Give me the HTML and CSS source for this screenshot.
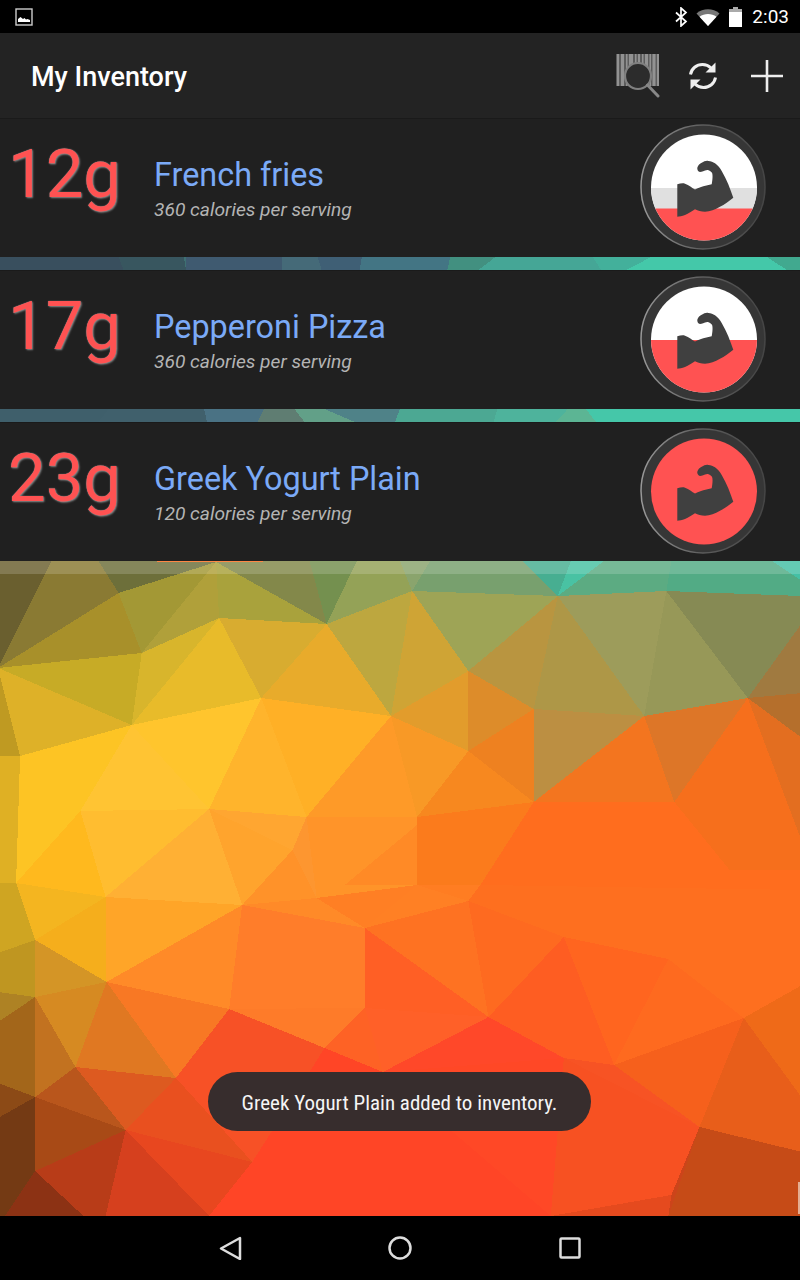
FILE: index.html
```html
<!DOCTYPE html>
<html lang="en">
<head>
  <meta charset="UTF-8">
  <meta name="viewport" content="width=device-width, initial-scale=1.0">
  <title>My Inventory</title>
  <link rel="stylesheet" href="styles.css">
</head>
<body>
  <div class="screen">
    <!-- Wallpaper, sits behind the whole list -->
    <svg class="wallpaper" viewBox="0 0 800 1216" width="800" height="1216">
      <defs>
        <linearGradient id="band" x1="0" x2="1" y1="0" y2="0">
          <stop offset="0" stop-color="#3b5260"/>
          <stop offset="0.6" stop-color="#44a090"/>
          <stop offset="0.8" stop-color="#45c7a9"/>
        </linearGradient>
      </defs>
      <rect y="0" width="800" height="561" fill="url(#band)"/>
      <rect y="561" width="800" height="655" fill="#fe6f1f"/>

      <!-- strip between row 1 and row 2 -->
      <polygon points="0,257 120,257 125,270 0,270" fill="#394f5e"/>
      <polygon points="120,257 185,257 187,270 125,270" fill="#38565f"/>
      <polygon points="187,257 283,257 283,270 187,270" fill="#3f5a70"/>
      <polygon points="283,257 318,257 322,270 283,270" fill="#456a78"/>
      <polygon points="318,257 362,257 360,270 322,270" fill="#3f5f75"/>
      <polygon points="362,257 450,257 447,270 360,270" fill="#437584"/>
      <polygon points="450,257 495,257 478,270 447,270" fill="#429080"/>
      <polygon points="495,257 592,257 600,270 478,270" fill="#45a696"/>
      <polygon points="592,257 650,257 625,270 600,270" fill="#43b09b"/>
      <polygon points="650,257 765,257 785,270 625,270" fill="#44c8a9"/>
      <polygon points="765,257 800,257 800,270 785,270" fill="#41a98f"/>

      <!-- strip between row 2 and row 3 -->
      <polygon points="0,409 110,409 100,422 0,422" fill="#3f5f6b"/>
      <polygon points="110,409 205,409 208,422 100,422" fill="#40606c"/>
      <polygon points="205,409 265,409 258,422 208,422" fill="#4a7284"/>
      <polygon points="265,409 295,409 305,422 258,422" fill="#5f7d72"/>
      <polygon points="295,409 325,409 355,422 305,422" fill="#62a088"/>
      <polygon points="325,409 400,409 395,422 355,422" fill="#4f8288"/>
      <polygon points="400,409 497,409 493,422 395,422" fill="#4ca893"/>
      <polygon points="497,409 567,409 555,422 493,422" fill="#4eb39c"/>
      <polygon points="567,409 585,409 595,422 555,422" fill="#5cb594"/>
      <polygon points="585,409 800,409 800,422 595,422" fill="#45c7a9"/>

      <!-- top of the open area -->
      <polygon points="0,561 53,561 0,668" fill="#6a5f2f"/>
      <polygon points="53,561 100,561 120,593 0,668" fill="#8a7a33"/>
      <polygon points="100,561 217,562 120,593" fill="#6d6f3a"/>
      <polygon points="120,593 217,562 143,653" fill="#a39835"/>
      <polygon points="217,562 220,618 143,653" fill="#b0a03a"/>
      <polygon points="0,668 120,593 143,653" fill="#a8902a"/>
      <polygon points="217,562 327,624 220,618" fill="#a9a23c"/>
      <polygon points="217,562 310,561 327,624" fill="#83884a"/>
      <polygon points="310,561 357,561 327,624" fill="#74904f"/>
      <polygon points="357,561 400,561 412,591 327,624" fill="#94a257"/>
      <polygon points="400,561 430,561 412,591" fill="#8aa46d"/>
      <polygon points="430,561 522,561 557,596 412,591" fill="#78a06e"/>
      <polygon points="522,561 570,561 557,596" fill="#47ae91"/>
      <polygon points="570,561 603,561 557,596" fill="#49c2a3"/>
      <polygon points="603,561 670,561 665,591 557,596" fill="#5cab82"/>
      <polygon points="670,561 770,561 800,581 800,596 665,591" fill="#52ab85"/>
      <polygon points="770,561 800,561 800,581" fill="#45c0a5"/>

      <polygon points="327,624 412,591 391,716" fill="#bda73f"/>
      <polygon points="412,591 468,671 391,716" fill="#cfa435"/>
      <polygon points="412,591 557,596 468,671" fill="#9ea456"/>
      <polygon points="557,596 533,709 468,671" fill="#b99540"/>
      <polygon points="557,596 643,716 533,709" fill="#ae9747"/>
      <polygon points="557,596 665,591 643,716" fill="#9d9c5b"/>
      <polygon points="665,591 746,698 643,716" fill="#979858"/>
      <polygon points="665,591 800,596 800,623 746,698" fill="#868a54"/>
      <polygon points="800,623 800,693 746,698" fill="#a07a40"/>
      <polygon points="746,698 800,693 800,738" fill="#b56f2c"/>
      <polygon points="746,698 800,738 800,842" fill="#e36e20"/>
      <polygon points="746,698 800,842 800,870 728,870 673,802" fill="#f66f1c"/>
      <polygon points="643,716 746,698 673,802" fill="#dd7628"/>
      <polygon points="643,716 673,802 533,802" fill="#f3751f"/>
      <polygon points="533,709 643,716 533,802" fill="#bc8f42"/>
      <polygon points="468,671 533,709 468,751" fill="#dd8c2a"/>
      <polygon points="468,751 533,709 533,802" fill="#ee8120"/>
      <polygon points="391,716 468,671 468,751" fill="#e29c2c"/>
      <polygon points="391,716 468,751 417,817" fill="#f89926"/>
      <polygon points="468,751 533,802 417,817" fill="#f7881f"/>
      <polygon points="417,817 533,802 480,885 417,885" fill="#fb7b1c"/>
      <polygon points="533,802 673,802 728,870 800,870 800,890 480,885" fill="#ff6d1e"/>

      <!-- yellow middle -->
      <polygon points="0,668 143,653 133,725" fill="#c7ab26"/>
      <polygon points="143,653 220,618 133,725" fill="#d8b52c"/>
      <polygon points="220,618 262,698 133,725" fill="#e8bb2a"/>
      <polygon points="220,618 327,624 262,698" fill="#d8ac30"/>
      <polygon points="327,624 391,716 262,698" fill="#e8ab2b"/>
      <polygon points="0,668 133,725 22,756" fill="#deb128"/>
      <polygon points="0,668 22,756 0,756" fill="#bf9a22"/>
      <polygon points="0,756 22,756 18,883 0,883" fill="#dfb024"/>
      <polygon points="22,756 133,725 82,811" fill="#fdc424"/>
      <polygon points="22,756 82,811 18,883" fill="#fdc424"/>
      <polygon points="133,725 262,698 210,809" fill="#ffc52d"/>
      <polygon points="133,725 210,809 82,811" fill="#ffc433"/>
      <polygon points="262,698 307,817 210,809" fill="#ffb42c"/>
      <polygon points="262,698 391,716 307,817" fill="#ffb026"/>
      <polygon points="391,716 417,817 307,817" fill="#fe9a28"/>
      <polygon points="307,817 417,817 417,885 317,898" fill="#ff9429"/>
      <polygon points="345,885 417,825 417,885" fill="#ff8a26"/>
      <polygon points="417,885 480,885 468,901" fill="#ff7d22"/>
      <polygon points="210,809 307,817 293,850" fill="#ffa631"/>
      <polygon points="210,809 293,850 243,905" fill="#ffa42d"/>
      <polygon points="293,850 307,817 317,898" fill="#fd9630"/>
      <polygon points="293,850 317,898 243,905" fill="#ff9229"/>
      <polygon points="82,811 210,809 107,897" fill="#ffbd30"/>
      <polygon points="210,809 243,905 107,897" fill="#ffb034"/>
      <polygon points="82,811 107,897 18,883" fill="#ffb91e"/>

      <!-- lower left, getting darker -->
      <polygon points="18,883 107,897 37,940" fill="#f4b520"/>
      <polygon points="107,897 108,982 37,940" fill="#f5ae1c"/>
      <polygon points="107,897 243,905 108,982" fill="#ffa528"/>
      <polygon points="243,905 230,1009 108,982" fill="#ff8a28"/>
      <polygon points="243,905 317,898 365,928" fill="#ff8a28"/>
      <polygon points="243,905 365,928 365,1008 230,1009" fill="#ff7d2a"/>
      <polygon points="317,898 417,885 365,928" fill="#ff7f24"/>
      <polygon points="0,883 18,883 37,940 0,953" fill="#cfa522"/>
      <polygon points="0,953 37,940 37,997 0,992" fill="#bf9621"/>
      <polygon points="37,940 108,982 37,997" fill="#d49526"/>
      <polygon points="0,992 37,997 0,1022" fill="#ae8224"/>
      <polygon points="0,1022 37,997 37,1097 0,1083" fill="#a3661a"/>
      <polygon points="37,997 77,1067 37,1097" fill="#c27220"/>
      <polygon points="37,997 108,982 77,1067" fill="#d68a22"/>
      <polygon points="108,982 177,1078 77,1067" fill="#e07822"/>
      <polygon points="108,982 230,1009 177,1078" fill="#f87824"/>
      <polygon points="77,1067 177,1078 127,1130" fill="#dd5a20"/>
      <polygon points="77,1067 127,1130 37,1097" fill="#b9561c"/>
      <polygon points="37,1097 127,1130 37,1171" fill="#a84a16"/>
      <polygon points="0,1083 37,1097 0,1118" fill="#8c4a16"/>
      <polygon points="0,1118 37,1097 37,1171 7,1216 0,1216" fill="#743a14"/>
      <polygon points="37,1171 85,1216 7,1216" fill="#8c3214"/>
      <polygon points="37,1171 127,1130 107,1216 85,1216" fill="#b83c18"/>
      <polygon points="127,1130 210,1216 107,1216" fill="#d6401e"/>
      <polygon points="127,1130 253,1162 210,1216" fill="#e8471f"/>
      <polygon points="177,1078 253,1162 127,1130" fill="#e9501f"/>
      <polygon points="177,1078 230,1009 325,1048 253,1162" fill="#f75126"/>
      <polygon points="230,1009 365,1008 325,1048" fill="#fe7b29"/>
      <polygon points="365,1008 383,1072 325,1048" fill="#fe6225"/>
      <polygon points="325,1048 383,1072 550,1216 210,1216 253,1162" fill="#ff4526"/>

      <!-- lower right -->
      <polygon points="365,928 488,1017 365,1008" fill="#ff5f25"/>
      <polygon points="365,1008 488,1017 383,1072" fill="#ff6028"/>
      <polygon points="383,1072 488,1017 563,1058" fill="#ff4829"/>
      <polygon points="383,1072 563,1058 550,1216" fill="#ff4826"/>
      <polygon points="563,1058 613,1065 698,1127" fill="#f75324"/>
      <polygon points="563,1058 698,1127 670,1195 550,1216" fill="#f75122"/>
      <polygon points="670,1195 698,1127 667,1216" fill="#cc441a"/>
      <polygon points="550,1216 670,1195 667,1216" fill="#e54a1e"/>
      <polygon points="698,1127 800,1152 800,1216 667,1216" fill="#c64b17"/>
      <polygon points="742,1018 800,1098 800,1152 698,1127" fill="#e85e1a"/>
      <polygon points="742,1018 800,985 800,1098" fill="#ef6a18"/>
      <polygon points="613,1065 742,1018 698,1127" fill="#f6601c"/>
      <polygon points="667,959 742,1018 613,1065" fill="#fe6a1f"/>
      <polygon points="563,937 667,959 613,1065" fill="#ff651f"/>
      <polygon points="563,937 613,1065 563,1058 488,1017" fill="#fe5d22"/>
      <polygon points="468,901 563,937 488,1017" fill="#fe6a20"/>
      <polygon points="365,928 468,901 488,1017" fill="#fe7222"/>
      <polygon points="417,885 468,901 365,928" fill="#ff8024"/>
      <rect x="796" y="1182" width="4" height="32" fill="#f2d9c8" opacity="0.7"/>
    </svg>

    <!-- Status bar -->
    <div class="status-bar">
      <svg class="status-picture" viewBox="0 0 18 18" width="18" height="18">
        <rect x="1" y="1" width="16" height="16" fill="#000" stroke="#ccc" stroke-width="1.4"/>
        <path d="M3 14v-3l2.500-2 2.500 2 1.500-1 1.500 1.500 1.500-.5 2.500 1v2z" fill="#fff"/>
      </svg>
      <div class="status-right">
        <svg viewBox="0 0 14 20" width="14" height="20">
          <path d="M2 5.500l10 9-5 4.500v-18l5 4.500-10 9" fill="none" stroke="#fff" stroke-width="1.700"/>
        </svg>
        <svg class="status-wifi" viewBox="0 0 24 18" width="24" height="18">
          <path d="M0.500 5.500c6.500-5.600 16.500-5.600 23 0l-11.500 12.500z" fill="#777"/>
          <path d="M3.500 8.700c5-3.700 12-3.700 17 0l-8.500 9.300z" fill="#fff"/>
        </svg>
        <svg class="status-battery" viewBox="0 0 13 20" width="13" height="20">
          <path d="M4 0h5v2h4v18h-13v-18h4z" fill="#fff"/>
          <path d="M4 0h5v2h4v3h-13v-3h4z" fill="#aaa"/>
        </svg>
        <span class="status-time">2:03</span>
      </div>
    </div>

    <!-- Action bar -->
    <header class="action-bar">
      <h1 class="action-title">My Inventory</h1>
      <svg class="action-barcode" viewBox="0 0 44 44" width="44" height="44">
        <rect width="43" height="32" fill="#5c5c5c"/>
        <path d="M1 0h2v32h-2zM5 0h3v32h-3zM10 0h1.500v32h-1.500zM13 0h4v32h-4zM19 0h1.500v32h-1.500zM22 0h2v32h-2zM26 0h1.500v32h-1.500zM29 0h3v32h-3zM33.500 0h1.500v32h-1.500zM36.500 0h3v32h-3zM41 0h2v32h-2z" fill="#929292"/>
        <circle cx="22" cy="22" r="13" fill="#2c2c2c" stroke="#808080" stroke-width="2.200"/>
        <path d="M31.500 31l10.500 11" fill="none" stroke="#888" stroke-width="3" stroke-linecap="round"/>
      </svg>
      <svg class="action-refresh" viewBox="0 0 32 32" width="32" height="32">
        <path d="M3.500 14.500c1-6 6-10 12-10 3.500 0 6.500 1.500 8.500 3.500" fill="none" stroke="#eee" stroke-width="3"/>
        <path d="M28.500 17.500c-1 6-6 10-12 10-3.500 0-6.500-1.500-8.500-3.500" fill="none" stroke="#eee" stroke-width="3"/>
        <path d="M28.500 2.500v10h-10z" fill="#eee"/>
        <path d="M3.500 29.500v-10h10z" fill="#eee"/>
      </svg>
      <svg class="action-plus" viewBox="0 0 32 32" width="32" height="32">
        <path d="M16 0v32M0 16h32" fill="none" stroke="#eee" stroke-width="2.600"/>
      </svg>
    </header>

    <!-- Inventory list -->
    <main class="list">
      <article class="row">
        <div class="protein">12g</div>
        <div class="info">
          <div class="name">French fries</div>
          <div class="calories">360 calories per serving</div>
        </div>
        <svg class="gauge" viewBox="0 0 126 126" width="126" height="126">
          <defs>
            <linearGradient id="rim" x1="0" x2="1" y1="0" y2="0">
              <stop offset="0" stop-color="#999"/>
              <stop offset="0.5" stop-color="#5c5c5c"/>
              <stop offset="1" stop-color="#454545"/>
            </linearGradient>
          </defs>
          <circle cx="63" cy="63" r="62" fill="#363636" stroke="url(#rim)" stroke-width="1.500"/>
          <clipPath id="dial1"><circle cx="64" cy="63.500" r="53"/></clipPath>
          <g clip-path="url(#dial1)">
            <rect width="126" height="126" fill="#fff"/>
            <rect y="64" width="126" height="22" fill="#e0e0e0"/>
            <rect y="84.500" width="126" height="42" fill="#ff5252"/>
          </g>
          <path class="muscle" d="M37.300 60.300C40 59.500 43 59 45 59.700C49 61 52 64 55 65.500C58 64 60 63 63.300 62.200C66 61.500 69 61 71.700 60.300C72.500 56 73 51 72 48.700C70 46.500 68.500 45.800 67.300 46C64 46.500 62 48 60 48C58 47.500 57 45.500 57.300 43.700C58 41 60 39.500 61.700 38.700C64 37.500 66 36.500 68.300 37C71 37.200 73 38 75 39.300C78 41.500 80 44 81.700 47C84 51 86.500 56 88.300 60.300C90 65 92 70 93.300 73.700C89 77 84.500 80.500 80 82.700C75 85.500 70 87.500 65 87.700C61 87.700 58 86.500 55 85.300C52 87 48.500 89.500 45 91C42 92 39.500 92.500 37.300 92.700z"/>
        </svg>
      </article>
      <article class="row">
        <div class="protein">17g</div>
        <div class="info">
          <div class="name">Pepperoni Pizza</div>
          <div class="calories">360 calories per serving</div>
        </div>
        <svg class="gauge" viewBox="0 0 126 126" width="126" height="126">
          <circle cx="63" cy="63" r="62" fill="#363636" stroke="url(#rim)" stroke-width="1.500"/>
          <clipPath id="dial2"><circle cx="64" cy="63.500" r="53"/></clipPath>
          <g clip-path="url(#dial2)">
            <rect width="126" height="126" fill="#fff"/>
            <rect y="64" width="126" height="62" fill="#ff5252"/>
          </g>
          <path class="muscle" d="M37.300 60.300C40 59.500 43 59 45 59.700C49 61 52 64 55 65.500C58 64 60 63 63.300 62.200C66 61.500 69 61 71.700 60.300C72.500 56 73 51 72 48.700C70 46.500 68.500 45.800 67.300 46C64 46.500 62 48 60 48C58 47.500 57 45.500 57.300 43.700C58 41 60 39.500 61.700 38.700C64 37.500 66 36.500 68.300 37C71 37.200 73 38 75 39.300C78 41.500 80 44 81.700 47C84 51 86.500 56 88.300 60.300C90 65 92 70 93.300 73.700C89 77 84.500 80.500 80 82.700C75 85.500 70 87.500 65 87.700C61 87.700 58 86.500 55 85.300C52 87 48.500 89.500 45 91C42 92 39.500 92.500 37.300 92.700z"/>
        </svg>
      </article>
      <article class="row">
        <div class="protein">23g</div>
        <div class="info">
          <div class="name">Greek Yogurt Plain</div>
          <div class="calories">120 calories per serving</div>
        </div>
        <svg class="gauge" viewBox="0 0 126 126" width="126" height="126">
          <circle cx="63" cy="63" r="62" fill="#363636" stroke="url(#rim)" stroke-width="1.500"/>
          <circle cx="64" cy="63.500" r="53" fill="#ff5252"/>
          <path class="muscle" d="M37.300 60.300C40 59.500 43 59 45 59.700C49 61 52 64 55 65.500C58 64 60 63 63.300 62.200C66 61.500 69 61 71.700 60.300C72.500 56 73 51 72 48.700C70 46.500 68.500 45.800 67.300 46C64 46.500 62 48 60 48C58 47.500 57 45.500 57.300 43.700C58 41 60 39.500 61.700 38.700C64 37.500 66 36.500 68.300 37C71 37.200 73 38 75 39.300C78 41.500 80 44 81.700 47C84 51 86.500 56 88.300 60.300C90 65 92 70 93.300 73.700C89 77 84.500 80.500 80 82.700C75 85.500 70 87.500 65 87.700C61 87.700 58 86.500 55 85.300C52 87 48.500 89.500 45 91C42 92 39.500 92.500 37.300 92.700z"/>
        </svg>
      </article>
      <div class="list-end"></div>
    </main>

    <div class="toast">Greek Yogurt Plain added to inventory.</div>

    <!-- Navigation bar -->
    <nav class="nav-bar">
      <svg viewBox="0 0 24 24" width="24" height="24">
        <path d="M22 2v21l-19-10.500z" fill="none" stroke="#ddd" stroke-width="2.500" stroke-linejoin="round"/>
      </svg>
      <svg viewBox="0 0 24 24" width="24" height="24">
        <circle cx="12" cy="12" r="10.500" fill="none" stroke="#ddd" stroke-width="2.500"/>
      </svg>
      <svg viewBox="0 0 24 24" width="24" height="24">
        <rect x="2.500" y="2.500" width="19" height="19" rx="1" fill="none" stroke="#ddd" stroke-width="2.500"/>
      </svg>
    </nav>
  </div>
</body>
</html>
```

FILE: styles.css
```css
/* General Styling */
html, body {
  margin: 0;
  padding: 0;
}

body {
  font-family: Roboto, "Noto Sans", sans-serif;
  background: #000;
}

.screen {
  position: relative;
  width: 800px;
  height: 1280px;
  display: flex;
  flex-direction: column;
  overflow: hidden;
}

/* slight scale pushes the blurred side edges out of the window */
.wallpaper {
  position: absolute;
  top: 0;
  left: 0;
  filter: blur(0.7px);
  transform: scaleX(1.005);
}

.wallpaper polygon {
  shape-rendering: crispEdges;
}

/* Status bar */
.status-bar {
  position: relative;
  height: 33px;
  background: #000;
  display: flex;
  align-items: center;
  justify-content: space-between;
  padding: 0 11px 0 15px;
}

.status-right {
  display: flex;
  align-items: center;
  color: #fff;
}

.status-wifi {
  margin-left: 8px;
}

.status-battery {
  margin-left: 9px;
}

.status-time {
  margin-left: 10px;
  font-size: 19px;
}

/* Action bar */
.action-bar {
  position: relative;
  height: 85px;
  background: #232323;
  display: flex;
  align-items: center;
  padding: 0 17px 0 31px;
}

.action-title {
  flex: 1;
  margin: 2px 0 0;
  font-size: 27px;
  font-weight: 500;
  color: #fff;
}

.action-refresh {
  margin-left: 27px;
}

.action-plus {
  margin-left: 32px;
}

/* Inventory list */
.list {
  position: relative;
  display: flex;
  flex-direction: column;
  gap: 13px;
  flex: 1;
}

.row {
  height: 139px;
  background: #202020;
  display: flex;
  align-items: flex-start;
  padding-left: 8px;
  box-shadow: inset 0 1px 0 #1a1a1a;
}

.protein {
  width: 146px;
  margin-top: 16px;
  font-size: 67px;
  line-height: 80px;
  color: #ff5252;
  text-shadow: 1px 1px 2px #888, 0 0 1px #aaa;
}

.info {
  flex: 1;
  margin-top: 37px;
}

.name {
  font-size: 32.4px;
  line-height: 40px;
  color: #7baaf7;
}

.calories {
  margin-top: 4px;
  font-size: 19.2px;
  line-height: 22px;
  font-style: italic;
  color: #b4b4b4;
}

.gauge {
  margin: 6px 34px 0 0;
}

.muscle {
  fill: #404040;
}

.list-end {
  height: 13px;
  margin-top: -13px;
  background: rgba(255, 255, 255, 0.17);
}

/* Toast */
.toast {
  position: absolute;
  top: 1072px;
  left: 208px;
  width: 383px;
  height: 59px;
  border-radius: 30px;
  background: #372d2d;
  color: #f5f5f5;
  font-size: 21px;
  font-stretch: 85%;
  line-height: 62px;
  text-align: center;
}

/* Navigation bar */
.nav-bar {
  position: relative;
  height: 64px;
  background: #000;
  display: flex;
  align-items: center;
  justify-content: center;
  gap: 146px;
}
```
